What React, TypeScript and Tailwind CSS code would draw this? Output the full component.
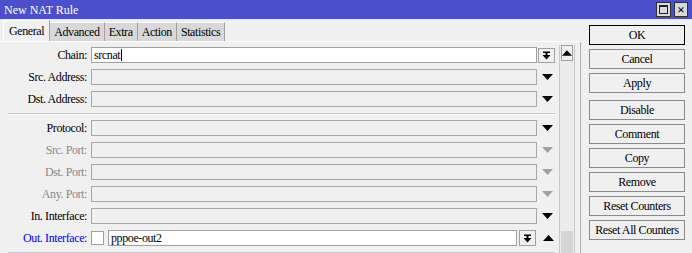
import React from 'react';

function DownBar() {
  return (
    <svg width="9" height="9" viewBox="0 0 9 9">
      <rect x="1" y="0.5" width="7" height="1.5" fill="#000" />
      <rect x="3.5" y="2" width="2" height="2" fill="#000" />
      <polygon points="0.5,4 8.5,4 4.5,8.5" fill="#000" />
    </svg>
  );
}

function Tri({ up = false, gray = false }: { up?: boolean; gray?: boolean }) {
  const c = gray ? '#a0a0a0' : '#000';
  return (
    <svg width="11" height="6" viewBox="0 0 11 6">
      {up ? <polygon points="0,6 11,6 5.5,0" fill={c} /> : <polygon points="0,0 11,0 5.5,6" fill={c} />}
    </svg>
  );
}

type Row = { label: string; tone?: 'gray' | 'blue'; value?: string; kind?: 'chain' | 'out' };

function FieldRow({ label, tone, value, kind }: Row) {
  const labelColor = tone === 'gray' ? 'text-[#8a8a8a]' : tone === 'blue' ? 'text-[#0000ff]' : 'text-black';
  return (
    <div className="flex h-[16px] items-center">
      <div className={`w-[89px] pr-[2px] text-right text-[12px] leading-none tracking-[-0.4px] ${labelColor}`}>{label}</div>
      {kind === 'out' ? (
        <>
          <div className="ml-[2px] h-[14px] w-[13px] border border-[#a0a0a0] bg-white" />
          <div className="ml-[4px] flex h-[16px] w-[409px] items-center border border-[#a0a0a0] bg-white px-[2px] text-[12px] tracking-[-0.4px]">
            {value}
          </div>
          <div className="ml-[2px] flex h-[16px] w-[17px] items-center justify-center border border-[#a0a0a0] bg-[#f0f0f0]">
            <DownBar />
          </div>
          <div className="ml-[6px] flex w-[12px] justify-center">
            <Tri up />
          </div>
        </>
      ) : kind === 'chain' ? (
        <>
          <div className="ml-[2px] flex h-[16px] w-[446px] items-center border border-[#a0a0a0] bg-white px-[2px] text-[12px] tracking-[-0.4px]">
            {value}
            <span className="ml-[1px] inline-block h-[12px] w-px bg-black" />
          </div>
          <div className="ml-[1px] flex h-[15px] w-[17px] items-center justify-center border border-[#a0a0a0] bg-[#f0f0f0]">
            <DownBar />
          </div>
        </>
      ) : (
        <>
          <div className="ml-[2px] h-[16px] w-[446px] border border-[#a8a8a8] bg-[#f0f0f0]" />
          <div className="ml-[4px] flex w-[12px] justify-center">
            <Tri gray={tone === 'gray'} />
          </div>
        </>
      )}
    </div>
  );
}

const buttons1 = ['OK', 'Cancel', 'Apply'];
const buttons2 = ['Disable', 'Comment', 'Copy', 'Remove', 'Reset Counters', 'Reset All Counters'];

export default function App() {
  const tabs = ['General', 'Advanced', 'Extra', 'Action', 'Statistics'];
  return (
    <div className="h-[253px] w-[692px] overflow-hidden bg-[#f0f0f0] font-['Liberation_Serif',serif] text-black">
      {/* title bar */}
      <div className="flex h-[19px] items-center bg-[#4b4fcb] pl-[4px] pr-[4px]">
        <span className="text-[12px] text-white">New NAT Rule</span>
        <div className="ml-auto flex gap-[3px]">
          <div className="flex h-[15px] w-[15px] items-center justify-center border border-[#303030] bg-[#d8d8d8]">
            <div className="h-[9px] w-[9px] border border-[#202020] border-t-2" />
          </div>
          <div className="flex h-[15px] w-[14px] items-center justify-center border border-[#303030] bg-[#d8d8d8] text-[13px] font-bold leading-none">
            ×
          </div>
        </div>
      </div>

      <div className="flex">
        {/* left panel */}
        <div className="w-[581px]">
          <div className="flex h-[22px] items-end pl-[3px]">
            {tabs.map((t, i) =>
              i === 0 ? (
                <div
                  key={t}
                  className="flex h-[21px] items-center border-l border-t border-r border-l-white border-t-white border-r-[#a0a0a0] bg-[#f0f0f0] px-[5px] text-[12px] tracking-[-0.4px]"
                >
                  {t}
                </div>
              ) : (
                <div
                  key={t}
                  className="flex h-[19px] items-center border-r border-t border-r-[#a0a0a0] border-t-white bg-[#d8d8d8] px-[4px] text-[12px] tracking-[-0.4px]"
                >
                  {t}
                </div>
              )
            )}
          </div>
          <div className="flex h-[212px] border-t border-white">
            <div className="w-[558px] pt-[5px]">
              <div className="flex flex-col gap-[6px]">
                <FieldRow label="Chain:" value="srcnat" kind="chain" />
                <FieldRow label="Src. Address:" />
                <FieldRow label="Dst. Address:" />
              </div>
              <div className="ml-[8px] mt-[6px] h-[2px] w-[547px] border-t border-[#c8c8c8] border-b border-b-white" />
              <div className="mt-[5px] flex flex-col gap-[6px]">
                <FieldRow label="Protocol:" />
                <FieldRow label="Src. Port:" tone="gray" />
                <FieldRow label="Dst. Port:" tone="gray" />
                <FieldRow label="Any. Port:" tone="gray" />
                <FieldRow label="In. Interface:" />
                <FieldRow label="Out. Interface:" tone="blue" value="pppoe-out2" kind="out" />
              </div>
              <div className="ml-[8px] mt-[6px] h-[2px] w-[547px] border-t border-[#c8c8c8] border-b border-b-white" />
            </div>
            {/* scrollbar */}
            <div className="ml-[1px] mt-[3px] flex w-[16px] flex-col border-l border-r border-[#c8c8c8] bg-[#ececec]">
              <div className="mx-[1px] flex h-[16px] items-center justify-center border border-[#a0a0a0] bg-[#f0f0f0]">
                <Tri up />
              </div>
              <div className="flex-1" />
              <div className="mx-[1px] h-[22px] bg-[#d4d4d4]" />
            </div>
            <div className="ml-[5px] border-l border-[#b0b0b0]" />
          </div>
        </div>

        {/* buttons */}
        <div className="ml-[8px] flex w-[96px] flex-col pt-[6px]">
          <div className="flex flex-col gap-[4px]">
            {buttons1.map((b, i) => (
              <div
                key={b}
                className={`flex h-[20px] items-center justify-center border bg-[#f0f0f0] text-[12px] tracking-[-0.4px] ${
                  i === 0 ? 'border-black' : 'border-[#8a8a8a]'
                }`}
              >
                {b}
              </div>
            ))}
          </div>
          <div className="mt-[7px] flex flex-col gap-[4px]">
            {buttons2.map(b => (
              <div
                key={b}
                className="flex h-[20px] items-center justify-center border border-[#8a8a8a] bg-[#f0f0f0] text-[12px] tracking-[-0.4px]"
              >
                {b}
              </div>
            ))}
          </div>
        </div>
      </div>
    </div>
  );
}
